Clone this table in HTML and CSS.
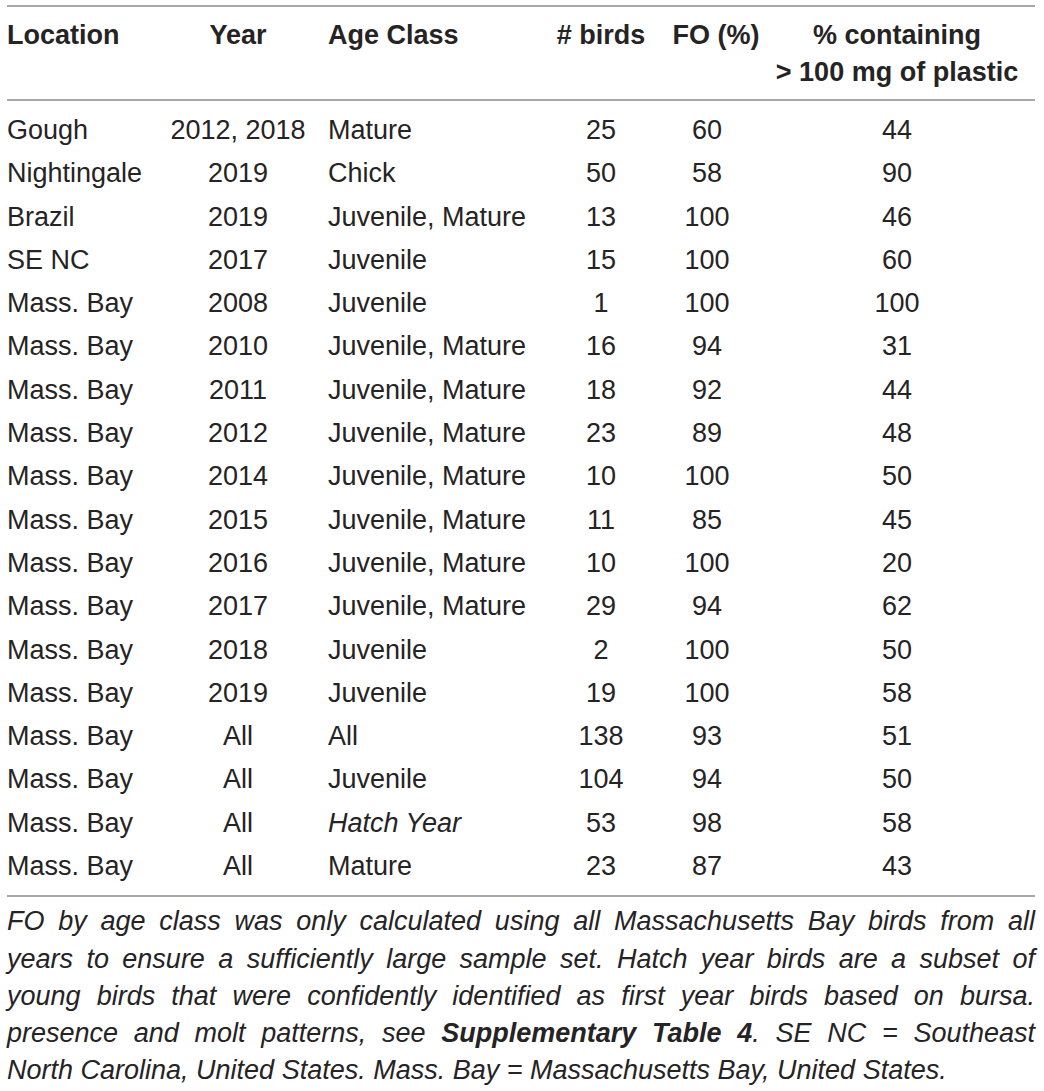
FILE: index.html
```html
<!DOCTYPE html>
<html lang="en">
<head>
  <meta charset="UTF-8" />
  <title>Plastic ingestion by location and year</title>
  <link rel="stylesheet" href="styles.css">
</head>
<body>
  <div class="sheet">
    <div class="rule"></div>
    <table class="data">
      <colgroup>
        <col class="c-loc">
        <col class="c-year">
        <col class="c-age">
        <col class="c-birds">
        <col class="c-fo">
        <col class="c-pct">
      </colgroup>
      <thead>
        <tr>
          <th class="left">Location</th>
          <th>Year</th>
          <th class="left age">Age Class</th>
          <th># birds</th>
          <th class="fo">FO (%)</th>
          <th class="pct">% containing<br>&gt; 100 mg of plastic</th>
        </tr>
      </thead>
      <tbody>
        <tr><td class="left">Gough</td><td>2012, 2018</td><td class="left age">Mature</td><td>25</td><td>60</td><td class="pct">44</td></tr>
        <tr><td class="left">Nightingale</td><td>2019</td><td class="left age">Chick</td><td>50</td><td>58</td><td class="pct">90</td></tr>
        <tr><td class="left">Brazil</td><td>2019</td><td class="left age">Juvenile, Mature</td><td>13</td><td>100</td><td class="pct">46</td></tr>
        <tr><td class="left">SE NC</td><td>2017</td><td class="left age">Juvenile</td><td>15</td><td>100</td><td class="pct">60</td></tr>
        <tr><td class="left">Mass. Bay</td><td>2008</td><td class="left age">Juvenile</td><td>1</td><td>100</td><td class="pct">100</td></tr>
        <tr><td class="left">Mass. Bay</td><td>2010</td><td class="left age">Juvenile, Mature</td><td>16</td><td>94</td><td class="pct">31</td></tr>
        <tr><td class="left">Mass. Bay</td><td>2011</td><td class="left age">Juvenile, Mature</td><td>18</td><td>92</td><td class="pct">44</td></tr>
        <tr><td class="left">Mass. Bay</td><td>2012</td><td class="left age">Juvenile, Mature</td><td>23</td><td>89</td><td class="pct">48</td></tr>
        <tr><td class="left">Mass. Bay</td><td>2014</td><td class="left age">Juvenile, Mature</td><td>10</td><td>100</td><td class="pct">50</td></tr>
        <tr><td class="left">Mass. Bay</td><td>2015</td><td class="left age">Juvenile, Mature</td><td>11</td><td>85</td><td class="pct">45</td></tr>
        <tr><td class="left">Mass. Bay</td><td>2016</td><td class="left age">Juvenile, Mature</td><td>10</td><td>100</td><td class="pct">20</td></tr>
        <tr><td class="left">Mass. Bay</td><td>2017</td><td class="left age">Juvenile, Mature</td><td>29</td><td>94</td><td class="pct">62</td></tr>
        <tr><td class="left">Mass. Bay</td><td>2018</td><td class="left age">Juvenile</td><td>2</td><td>100</td><td class="pct">50</td></tr>
        <tr><td class="left">Mass. Bay</td><td>2019</td><td class="left age">Juvenile</td><td>19</td><td>100</td><td class="pct">58</td></tr>
        <tr><td class="left">Mass. Bay</td><td>All</td><td class="left age">All</td><td>138</td><td>93</td><td class="pct">51</td></tr>
        <tr><td class="left">Mass. Bay</td><td>All</td><td class="left age">Juvenile</td><td>104</td><td>94</td><td class="pct">50</td></tr>
        <tr><td class="left">Mass. Bay</td><td>All</td><td class="left age"><em>Hatch Year</em></td><td>53</td><td>98</td><td class="pct">58</td></tr>
        <tr><td class="left">Mass. Bay</td><td>All</td><td class="left age">Mature</td><td>23</td><td>87</td><td class="pct">43</td></tr>
      </tbody>
    </table>

    <div class="note">
      <span class="line">FO by age class was only calculated using all Massachusetts Bay birds from all</span>
      <span class="line">years to ensure a sufficiently large sample set. Hatch year birds are a subset of</span>
      <span class="line">young birds that were confidently identified as first year birds based on bursa.</span>
      <span class="line">presence and molt patterns, see <strong>Supplementary Table 4</strong>. SE NC = Southeast</span>
      <span class="line last">North Carolina, United States. Mass. Bay = Massachusetts Bay, United States.</span>
    </div>
  </div>
</body>
</html>
```

FILE: styles.css
```css
:root {
  --text: #262324;
  --rule: #a8a8a8;
}

body {
  margin: 0;
  background: #fff;
  color: var(--text);
  font-family: "Liberation Sans", Arial, sans-serif;
}

.sheet {
  width: 1028px;
  padding: 5px 0 0 7px;
}

.rule {
  height: 2px;
  background: var(--rule);
}

.data {
  width: 100%;
  border-collapse: separate;
  border-spacing: 0;
  table-layout: fixed;
  font-size: 27px;
}

.c-loc { width: 161px; }
.c-year { width: 140px; }
.c-age { width: 248px; }
.c-birds { width: 90px; }
.c-fo { width: 122px; }
.c-pct { width: 267px; }

th {
  font-weight: bold;
  line-height: 37px;
  padding: 10px 0 8px;
  text-align: center;
  vertical-align: top;
  white-space: nowrap;
  border-bottom: 2px solid var(--rule);
}

td {
  padding: 0;
  line-height: 43.3px;
  text-align: center;
  white-space: nowrap;
}

tbody tr:first-child td { padding-top: 8px; }
tbody tr:last-child td {
  padding-bottom: 7px;
  border-bottom: 2px solid var(--rule);
}

.left { text-align: left; }
.age { padding-left: 20px; }
th.fo { padding-left: 18px; }
.pct { padding-right: 9px; }

.note {
  padding-top: 6px;
  font-size: 27px;
  font-style: italic;
  line-height: 37.2px;
}

.note .line {
  display: block;
  text-align: justify;
  text-align-last: justify;
}

.note .line.last {
  text-align-last: left;
}

.note strong {
  font-weight: bold;
}
```
